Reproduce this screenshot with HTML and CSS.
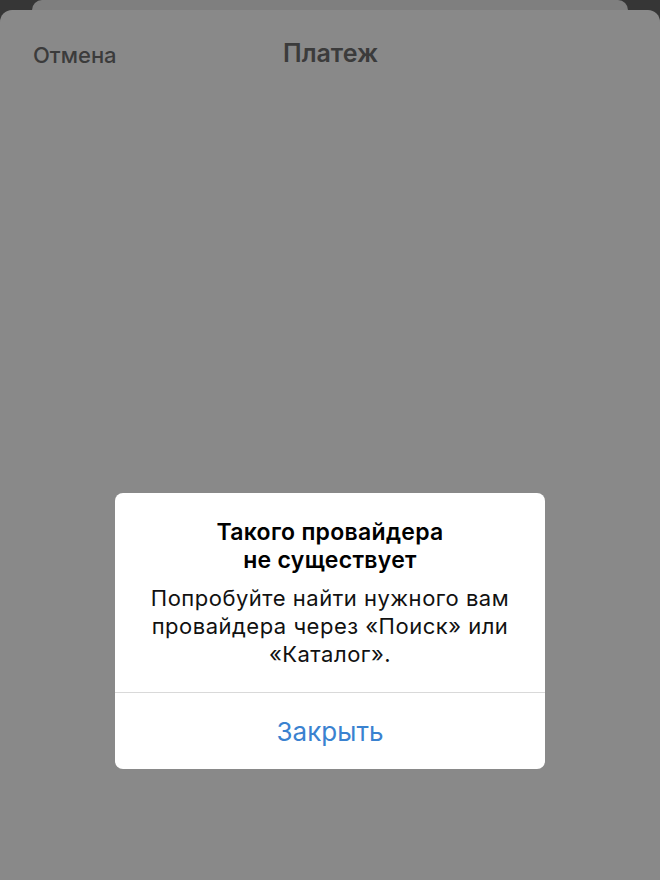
FILE: index.html
```html
<!DOCTYPE html>
<html lang="ru">
<head>
<meta charset="utf-8">
<link rel="stylesheet" href="styles.css">
</head>
<body>
<div class="screen">
  <div class="back-card"></div>
  <div class="sheet">
    <div class="nav">
      <span class="cancel">Отмена</span>
      <span class="title">Платеж</span>
    </div>
  </div>
  <div class="alert">
    <div class="alert-body">
      <div class="alert-title">Такого провайдера<br>не существует</div>
      <div class="alert-text">Попробуйте найти нужного вам<br>провайдера через «Поиск» или<br>«Каталог».</div>
    </div>
    <div class="alert-btn">Закрыть</div>
  </div>
</div>
</body>
</html>
```

FILE: styles.css
```css
html, body {
  margin: 0;
  padding: 0;
}
body {
  background: #363636;
  font-family: Inter, "Liberation Sans", Arial, sans-serif;
}
.screen {
  position: relative;
  width: 660px;
  height: 880px;
  display: flex;
  flex-direction: column;
  overflow: hidden;
}
.back-card {
  height: 10px;
  margin: 0 32px;
  background: #7f7f7f;
  border-radius: 10px 10px 0 0;
  flex: none;
}
.sheet {
  flex: 1;
  background: #898989;
  border-radius: 12px 12px 0 0;
}
.nav {
  position: relative;
  height: 66px;
}
.cancel {
  position: absolute;
  left: 33px;
  top: 32px;
  font-size: 22px;
  font-weight: 500;
  color: #3b3b3b;
}
.title {
  position: absolute;
  left: 283px;
  top: 28px;
  font-size: 25px;
  font-weight: 600;
  color: #3b3b3b;
}
.alert {
  position: absolute;
  left: 115px;
  top: 493px;
  width: 430px;
  height: 276px;
  background: #ffffff;
  border-radius: 8px;
  display: flex;
  flex-direction: column;
}
.alert-body {
  height: 200px;
  border-bottom: 1px solid #d9d9d9;
  text-align: center;
  padding-top: 25px;
  box-sizing: border-box;
}
.alert-title {
  font-size: 23px;
  font-weight: 600;
  line-height: 28px;
  letter-spacing: 0.3px;
  color: #000;
}
.alert-text {
  margin-top: 10px;
  font-size: 22px;
  line-height: 28px;
  letter-spacing: 0.5px;
  color: #111;
}
.alert-btn {
  flex: 1;
  display: flex;
  align-items: center;
  justify-content: center;
  font-size: 26px;
  color: #3a82d0;
}
```
